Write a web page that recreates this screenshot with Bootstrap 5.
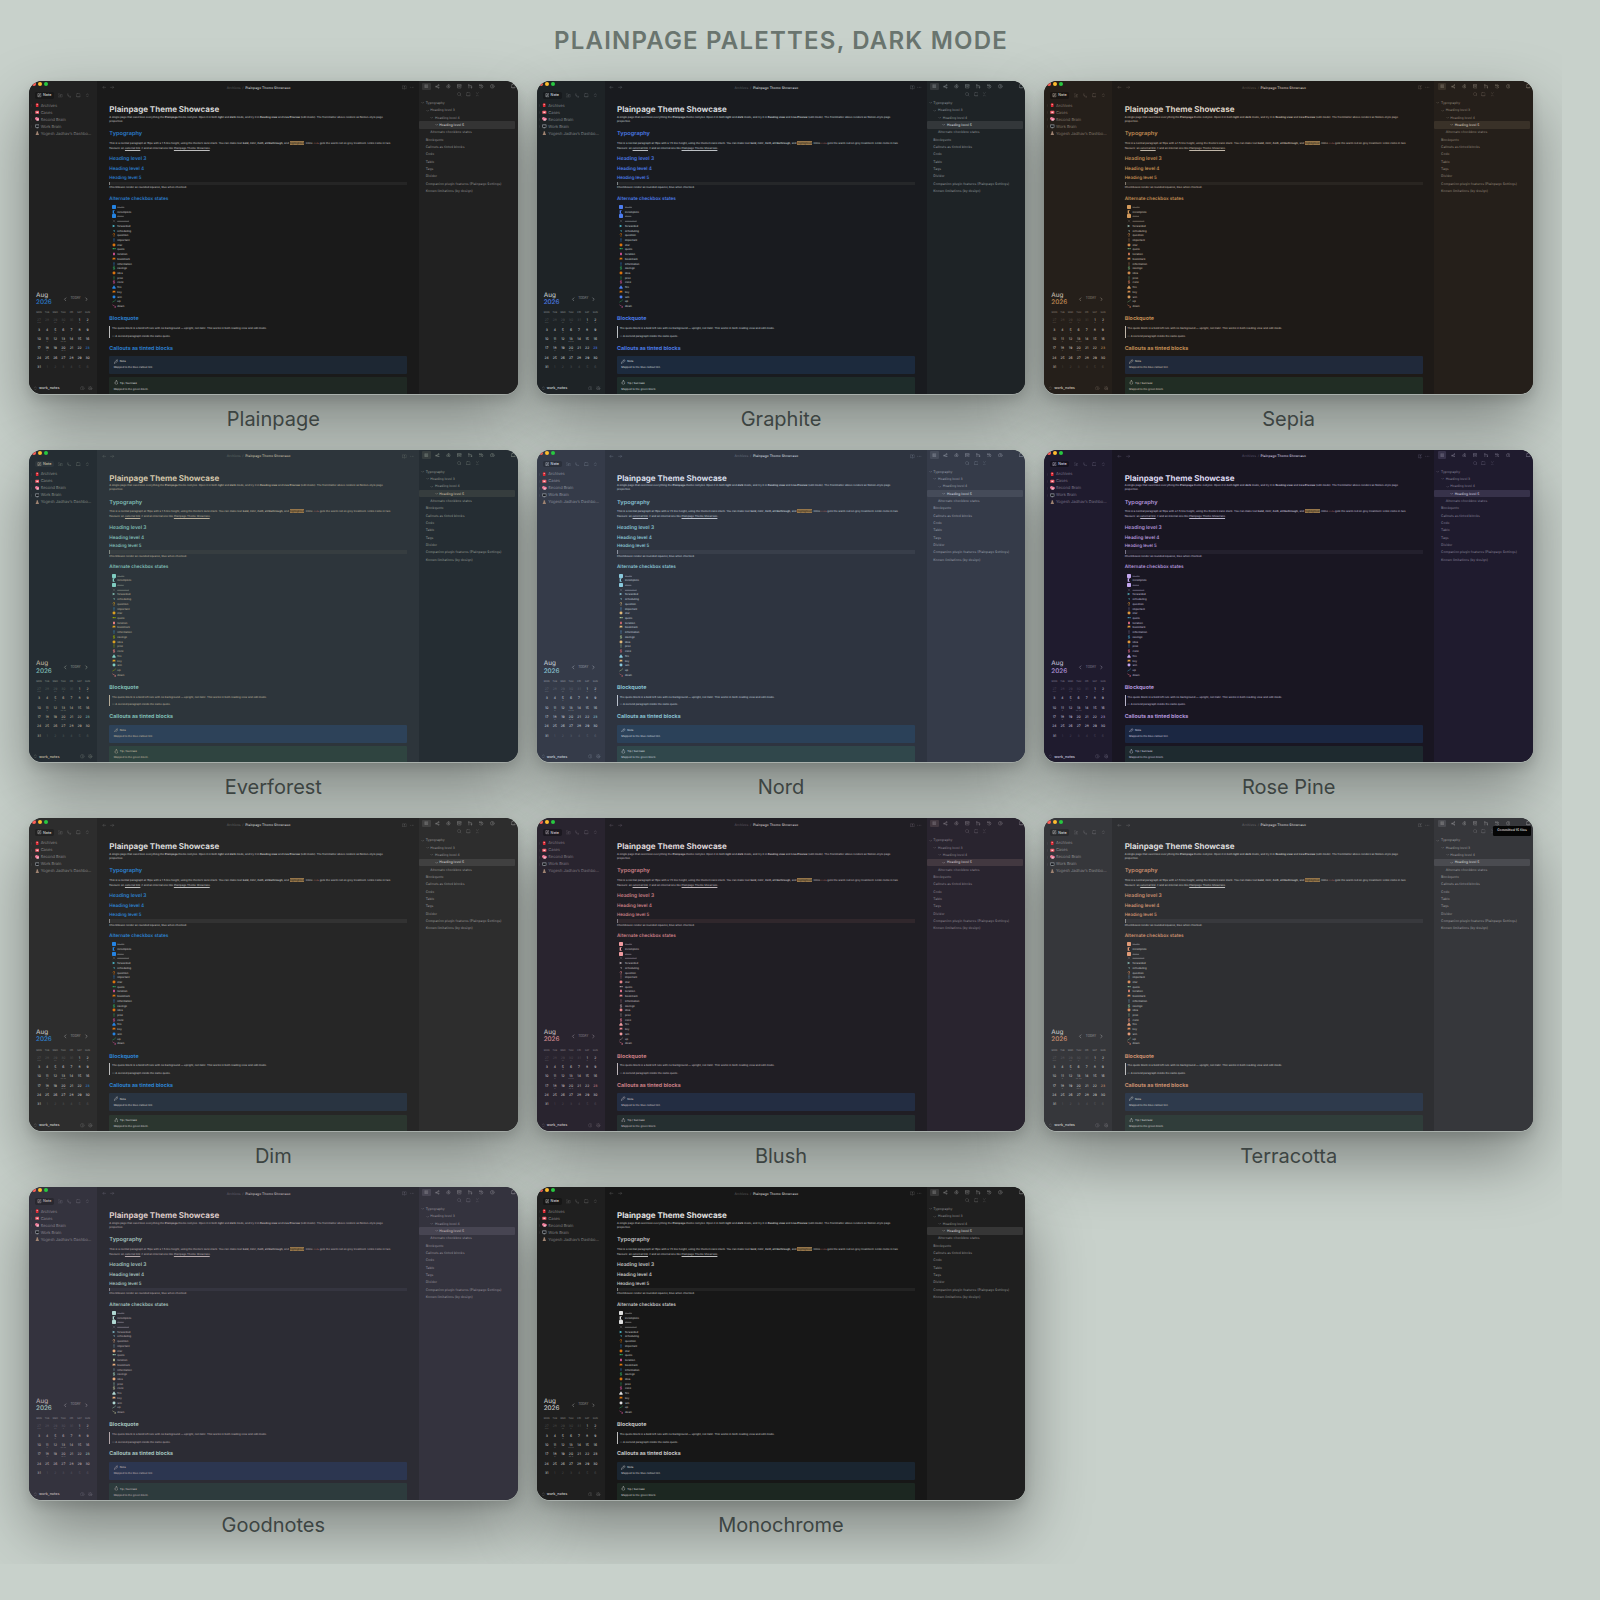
<!DOCTYPE html>
<html lang="en">
<head>
<meta charset="utf-8">
<meta name="viewport" content="width=device-width, initial-scale=1">
<title>Plainpage palettes, dark mode</title>
<link href="https://cdn.jsdelivr.net/npm/bootstrap@5.3.0/dist/css/bootstrap.min.css" rel="stylesheet">
<style>
  body { background: #c8d1cb; font-family: Inter, "Liberation Sans", sans-serif; padding-right: 38px; padding-bottom: 38px; }
  .gallery { padding: 29px 29px 27px; overflow: hidden; }
  .gallery-title { font-size: 24px; line-height: 24px; font-weight: 600; letter-spacing: .05em; color: #6a756f; margin-bottom: 28px; }
  .palettes { display: grid; grid-template-columns: repeat(3, minmax(0, 1fr)); column-gap: 19px; row-gap: 19px; }
  .frame { border-radius: 13px; box-shadow: 0 1px 0 #a9b0ac, 0 28px 64px rgba(0,0,0,.38), 0 6px 12px rgba(0,0,0,.12); overflow: hidden; }
  .palette-name { font-size: 20px; line-height: 24px; color: #3d4543; margin-top: 13px; }

  /* Miniature app window: laid out at desktop size, shown at a third */
  .mini { zoom: .33333; height: 938px; font-size: 8px; line-height: 12px; font-weight: 500; color: var(--text); background: var(--ed); text-rendering: geometricPrecision; overflow: hidden; }
  .mini svg { fill: none; stroke: currentColor; stroke-width: 1.6; stroke-linecap: round; stroke-linejoin: round; flex: none; display: block; width: 14px; height: 14px; }
  .mini button { background: none; border: 0; padding: 0; color: inherit; font-weight: inherit; display: flex; align-items: center; }
  .mini a { color: inherit; text-decoration: none; }
  .mini p { margin: 0; }
  .mini h3, .mini h4, .mini h5, .mini h6 { margin: 0; font-weight: 600; color: var(--head); line-height: 18px; }

  .side { width: 204px; background: var(--side); flex: none; }
  .lights { height: 20px; padding-left: 8px; gap: 6px; }
  .light { width: 12px; height: 12px; border-radius: 50%; }
  .tools { margin-top: 13px; height: 20px; padding-left: 18px; gap: 13px; color: var(--faint); }
  .mini .new-note { width: 57px; height: 20px; border-radius: 5px; background: var(--btn); color: var(--text); font-size: 11px; font-weight: 600; gap: 4px; padding-left: 6px; }
  .tree { margin-top: 11px; color: var(--muted); font-size: 12px; font-weight: 400; }
  .tree a { height: 21px; display: flex; align-items: center; gap: 4px; padding-left: 4px; }
  .tree .chev { width: 9px; height: 9px; color: var(--faint); }
  .tree .glyph { stroke: none; }
  .cal-head { padding: 0 26px 0 21px; font-size: 19px; line-height: 22px; }
  .cal-year { color: var(--acc); }
  .cal-nav { gap: 9px; margin-left: auto; font-size: 9px; color: var(--muted); }
  .cal-nav svg { stroke-width: 2.4; }
  .cal { width: 170px; margin: 15px 0 24px 18px; table-layout: fixed; font-size: 10px; text-align: center; line-height: 12px; }
  .cal th { font-size: 7px; height: 21px; color: var(--muted); font-weight: 500; padding: 0; vertical-align: top; text-align: center; }
  .cal td { height: 28px; padding: 0; vertical-align: top; }
  .cal .off { color: var(--faint); opacity: .7; }
  .cal .today { color: var(--head); }
  .dots { display: block; font-size: 7px; line-height: 5px; color: var(--muted); }
  .vault { height: 34px; padding: 0 12px 0 12px; gap: 11px; font-size: 11px; font-weight: 600; color: var(--faint); }
  .vault b { color: var(--text); font-weight: 600; }

  .bar-top { height: 40px; padding: 0 14px; font-size: 10px; color: var(--faint); }
  .bar-top .back-forward { gap: 12px; }
  .bar-top .view-tools { gap: 8px; }
  .crumb { gap: 5px; }
  .crumb b { font-weight: 600; color: var(--text); }
  .page { padding: 29px 35px 0 37px; }
  .mini .doc-title { font-size: 24px; line-height: 32px; font-weight: 700; color: var(--title); }
  .mini .sec { font-size: 16px; line-height: 20px; font-weight: 700; }
  .mini .sec-first { font-size: 17px; font-weight: 600; margin: 25px 0 9px; }
  .mini .lvl3 { font-size: 15px; margin: 19px 0 12px; }
  .mini .lvl4 { font-size: 14px; margin-bottom: 11px; }
  .mini .lvl5 { font-size: 13px; }
  .mini .states { font-size: 14px; margin-top: 19px; }
  .mini .callouts { margin-bottom: 12px; }
  .mini mark { padding: 0 1px; background: var(--hl); color: #241f18; }
  .mini code { font-size: 7px; color: #b56a62; font-family: "Liberation Mono", monospace; }
  .mini .ref { text-decoration: underline; }
  .active-line { height: 11px; background: var(--line); border-left: 1px solid var(--muted); }
  .tasks { height: 312px; margin: 9px 0 23px; padding-left: 7px; }
  .task { height: 14px; gap: 5px; display: flex; align-items: center; }
  .mini .task svg { width: 12px; height: 12px; stroke-width: 2.4; }
  .task input { appearance: none; width: 12px; height: 12px; margin: 0; border-radius: 2px; background: var(--box); }
  .done-text { color: var(--faint); text-decoration: line-through; }
  .quote { border-left: 3px solid var(--text); padding-left: 5px; gap: 11px; margin: 9px 0 24px; }
  .note-box { height: 54px; border-radius: 3px; padding: 9px 13px; margin-bottom: 10px; }
  .note-box.blue-tint { background: var(--note); }
  .note-box.green-tint { background: var(--tip); }
  .note-title { height: 14px; gap: 4px; font-weight: 600; margin-bottom: 5px; }

  .outline { width: 296px; background: var(--side); flex: none; color: var(--muted); font-size: 10px; }
  .tabs { height: 22px; margin-top: 5px; padding-left: 10px; gap: 7px; }
  .tabs button { width: 26px; height: 22px; justify-content: center; border-radius: 3px; }
  .tabs .on { background: var(--sel); }
  .tabs2 { height: 26px; gap: 12px; color: var(--faint); }
  .toc { margin-top: 2px; }
  .toc a { height: 22px; display: flex; align-items: center; margin-right: 8px; padding-left: 6px; gap: 4px; }
  .mini .toc svg { width: 10px; height: 10px; }
  .toc .lv2 { padding-left: 20px; } .toc .lv3 { padding-left: 34px; } .toc .lv4 { padding-left: 47px; }
  .toc .lv1n { padding-left: 20px; } .toc .lv2n { padding-left: 34px; }
  .toc .now { background: var(--sel); color: var(--text); font-weight: 600; border-radius: 3px; }
  .toast-tip { position: absolute; right: 7px; top: 24px; width: 112px; height: 28px; line-height: 28px; background: #050505; color: #ddd; border-radius: 4px; font-size: 10px; text-align: center; font-weight: 600; }
</style>
</head>
<body>
<svg width="0" height="0" class="position-absolute" aria-hidden="true">
  <symbol id="pen" viewBox="0 0 16 16"><path d="M8 2H3v11h11V8M6 10l1-3 6-6 2 2-6 6z"/></symbol>
  <symbol id="folder" viewBox="0 0 16 16"><path d="M1 3h5l2 2h7v9H1zM8 7v5M5.500 9.500h5"/></symbol>
  <symbol id="sort" viewBox="0 0 16 16"><path d="M3 2v8l8 4M3 6l3 4M11 10l3 4-4 1"/></symbol>
  <symbol id="square" viewBox="0 0 16 16"><rect x="2" y="2" width="12" height="12" rx="2"/><path d="M2 12h12"/></symbol>
  <symbol id="updown" viewBox="0 0 16 16"><path d="M5 6l3-4 3 4M5 10l3 4 3-4"/></symbol>
  <symbol id="right" viewBox="0 0 16 16"><path d="M6 3l5 5-5 5"/></symbol>
  <symbol id="left" viewBox="0 0 16 16"><path d="M10 3L5 8l5 5"/></symbol>
  <symbol id="down" viewBox="0 0 16 16"><path d="M3 6l5 5 5-5"/></symbol>
  <symbol id="aleft" viewBox="0 0 16 16"><path d="M14 8H3M7 4L3 8l4 4"/></symbol>
  <symbol id="aright" viewBox="0 0 16 16"><path d="M2 8h11M9 4l4 4-4 4"/></symbol>
  <symbol id="book" viewBox="0 0 16 16"><path d="M8 4v10M8 4C6 2 3 2 1 3v10c3-1 5 0 7 1 2-1 4-2 7-1V3c-2-1-5-1-7 1z"/></symbol>
  <symbol id="dots" viewBox="0 0 16 16"><path d="M2 8h1M8 8h1M13 8h1"/></symbol>
  <symbol id="list" viewBox="0 0 16 16"><path d="M5 3h8M5 6h8M5 9h8M5 12h8M3 3v9"/></symbol>
  <symbol id="graph" viewBox="0 0 16 16"><circle cx="4" cy="9" r="2.500"/><circle cx="12" cy="4" r="2"/><circle cx="12" cy="13" r="2"/><path d="M6 8l4-3M6 10l4 2"/></symbol>
  <symbol id="tag" viewBox="0 0 16 16"><path d="M2 8l5-6h4l4 6-4 6H7zM6 8h5M9 5v6"/></symbol>
  <symbol id="archive" viewBox="0 0 16 16"><path d="M1 2h14v4H1zM2 6v8h12V6M6 9h4"/></symbol>
  <symbol id="pull" viewBox="0 0 16 16"><path d="M3 14V2l-2 3M3 2l3 3M7 6h5v8M10 11l2 3 3-3"/></symbol>
  <symbol id="history" viewBox="0 0 16 16"><path d="M2 2v4h4M2 6a6 6 0 1 1 0 5M8 5v4l3 1"/></symbol>
  <symbol id="info" viewBox="0 0 16 16"><circle cx="8" cy="8" r="6.500"/><path d="M8 7v4M8 5v0"/></symbol>
  <symbol id="search" viewBox="0 0 16 16"><circle cx="7" cy="7" r="5.500"/><path d="M11 11l4 4"/></symbol>
  <symbol id="collapse" viewBox="0 0 16 16"><path d="M4 2l4 4 4-4M4 14l4-4 4 4"/></symbol>
  <symbol id="help" viewBox="0 0 16 16"><circle cx="8" cy="8" r="6.500"/><path d="M6 6a2 2 0 1 1 2 3M8 11v1"/></symbol>
  <symbol id="gear" viewBox="0 0 16 16"><circle cx="8" cy="8" r="5.500"/><circle cx="8" cy="8" r="2"/><path d="M8 1v2M8 13v2M1 8h2M13 8h2M3 3l1 1M12 12l1 1M13 3l-1 1M4 12l-1 1"/></symbol>
  <symbol id="pencil" viewBox="0 0 16 16"><path d="M1 15l1-4 9-9 3 3-9 9zM9 4l3 3"/></symbol>
  <symbol id="flame" viewBox="0 0 16 16"><path d="M8 1c1 4 5 5 5 9a5 5 0 0 1-10 0c0-2 1-3 2-4l1 2c1-2 2-4 2-7z"/></symbol>
  <symbol id="half" viewBox="0 0 12 12"><path d="M2 1h6v10H2z" fill="currentColor" stroke="none"/><path d="M6 3h5v6H6z" fill="var(--ed)" stroke="none"/></symbol>
  <symbol id="cross" viewBox="0 0 12 12"><path d="M3 3l6 6M9 3l-6 6" stroke-width="1.500"/></symbol>
  <symbol id="fwd" viewBox="0 0 12 12"><path d="M2 2l8 4-8 4z" fill="currentColor" stroke="none"/></symbol>
  <symbol id="sched" viewBox="0 0 12 12"><path d="M3 5l5-1v4z" fill="currentColor" stroke="none"/></symbol>
  <symbol id="quest" viewBox="0 0 12 12"><path d="M3 3c1-2 5-2 5 0s-2 2-2 4M6 10v0" stroke-width="2"/></symbol>
  <symbol id="bang" viewBox="0 0 12 12"><path d="M6 2v5M6 10v0" stroke-width="2"/></symbol>
  <symbol id="disc" viewBox="0 0 12 12"><circle cx="6" cy="6" r="4.500" fill="currentColor" stroke="none"/></symbol>
  <symbol id="quo" viewBox="0 0 12 12"><path d="M2 3h4v4H2zM7 3h4v4H7z" fill="currentColor" stroke="none"/></symbol>
  <symbol id="pin" viewBox="0 0 12 12"><path d="M3 2h6v5l-3 4-3-4z" fill="currentColor" stroke="none"/></symbol>
  <symbol id="flag" viewBox="0 0 12 12"><path d="M2 2h8v6l-4-1-4 2z" fill="currentColor" stroke="none"/></symbol>
  <symbol id="cash" viewBox="0 0 12 12"><path d="M8 3H4v3h4v3H4M6 1v10" stroke-width="1.500"/></symbol>
  <symbol id="fire" viewBox="0 0 12 12"><path d="M6 1l5 7v3H1V8z" fill="currentColor" stroke="none"/></symbol>
  <symbol id="rise" viewBox="0 0 12 12"><path d="M1 10l3-3 2 1 5-6" stroke-width="1.500"/></symbol>
  <symbol id="fall" viewBox="0 0 12 12"><path d="M1 2l3 3 2-1 5 6M8 10h3V7" stroke-width="1.500"/></symbol>
</svg>

<main class="gallery">
  <h1 class="gallery-title text-center text-uppercase">Plainpage palettes, dark mode</h1>
  <section class="palettes" id="palettes"></section>
</main>

<script>
const base = { orange: '#d9730d', green: '#2f9e5b', pink: '#c14c8a', blue: '#2a7fd0', teal: '#4cc0d0', hl: '#96764a' };
const themes = [
  { name: 'Plainpage', side: '#212121', ed: '#1a1a1a', head: '#2a7ac8', acc: '#2a7ac8', box: '#2483e2', title: '#d6d6d6', text: '#bdbdbd', muted: '#808080', faint: '#555', sel: '#343434', line: '#252525', btn: '#191919', note: '#1d2733', tip: '#1f2823' },
  { name: 'Graphite', side: '#1e2326', ed: '#191b1f', head: '#4a7ae4', acc: '#4a7ae4', box: '#4c7df0', title: '#d6d9dd', text: '#bcc0c4', muted: '#7f8589', faint: '#54595d', sel: '#33373a', line: '#252729', btn: '#171a1d', note: '#1c2a3d', tip: '#1e2c2a' },
  { name: 'Sepia', side: '#251f1a', ed: '#1e1a17', head: '#c08c54', acc: '#c08c54', box: '#d49a5b', title: '#ddd3c5', text: '#c0b6a8', muted: '#82786c', faint: '#5a5147', sel: '#393128', line: '#292521', btn: '#1a1613', note: '#20293a', tip: '#212d24', orange: '#d28b4c', green: '#6a9a68', pink: '#c0704f', blue: '#a0724c', teal: '#8fb0a8' },
  { name: 'Everforest', side: '#252d33', ed: '#2d353b', head: '#7fbbb3', acc: '#7fbbb3', box: '#7fccc0', title: '#d3c6aa', text: '#b5ab97', muted: '#828a83', faint: '#5a6361', sel: '#363d3e', line: '#363d40', btn: '#2c353b', note: '#2d4259', tip: '#2f4440', orange: '#dba020', green: '#8da101', pink: '#e67e80', blue: '#3a94c5', teal: '#83c0b2' },
  { name: 'Nord', side: '#353b49', ed: '#2e3440', head: '#88c0d0', acc: '#88c0d0', box: '#88c8dc', title: '#d8dee9', text: '#b9c0cc', muted: '#8a909d', faint: '#626978', sel: '#454b59', line: '#383e4a', btn: '#2b303b', note: '#2b4159', tip: '#30474b', orange: '#e0b878', green: '#a3be8c', pink: '#bf616a', blue: '#5e9bd1', teal: '#88c0d0' },
  { name: 'Rose Pine', side: '#1f1b2e', ed: '#191622', head: '#b094d8', acc: '#b094d8', box: '#c4a7f0', title: '#dedaf0', text: '#b9b5ca', muted: '#797489', faint: '#534e64', sel: '#37324a', line: '#23202d', btn: '#15121f', note: '#1b2742', tip: '#1e2a2f', orange: '#e09a3c', green: '#3e8fb0', pink: '#d0647c', blue: '#6f6a86', teal: '#4fa5b0' },
  { name: 'Dim', side: '#2d2d2d', ed: '#262626', head: '#2d82d0', acc: '#2d82d0', box: '#2483e2', title: '#dadada', text: '#bdbdbd', muted: '#868686', faint: '#5e5e5e', sel: '#404040', line: '#323232', btn: '#222', note: '#293441', tip: '#2b362f' },
  { name: 'Blush', side: '#29242f', ed: '#201e24', head: '#c87e85', acc: '#d28a90', box: '#f09a9f', title: '#dfd6da', text: '#bdb4b9', muted: '#7f7881', faint: '#59525d', sel: '#423840', line: '#30272c', btn: '#1b1820', note: '#232d42', tip: '#252f30', orange: '#e8858c', green: '#a9949a', pink: '#d86f8a', blue: '#9a5f70', teal: '#b8a8ae' },
  { name: 'Terracotta', side: '#36373b', ed: '#2e2f32', head: '#cb8f70', acc: '#cb8f70', box: '#e39c78', title: '#dcdcdc', text: '#bfbfbf', muted: '#8c8c8f', faint: '#646468', sel: '#4a4b50', line: '#38393d', btn: '#2a2b2e', note: '#2e3a4c', tip: '#303d3a', orange: '#e0925f', green: '#7fae8c', pink: '#cf7f6c', blue: '#6d97b8', teal: '#86b6b0', toast: 'Committed 15 files' },
  { name: 'Goodnotes', side: '#34333e', ed: '#2c2c34', head: '#a3c0bd', acc: '#a3c0bd', box: '#b0d8d2', title: '#dccac8', text: '#b3a6a9', muted: '#87838d', faint: '#605d69', sel: '#474552', line: '#353540', btn: '#292830', note: '#2c3650', tip: '#2d3b3d', orange: '#e5ab7c', green: '#8fc0aa', pink: '#a9b08a', blue: '#6f98a8', teal: '#7fb8c4' },
  { name: 'Monochrome', side: '#1f1f1f', ed: '#171717', head: '#c4c4c4', acc: '#c4c4c4', box: '#e0e0e0', title: '#e0e0e0', text: '#bdbdbd', muted: '#808080', faint: '#545454', sel: '#363636', line: '#232323', btn: '#161616', note: '#1a2530', tip: '#1c2721' }
];

const icon = (id, cls = '', color = '') => `<svg class="${cls}"${color ? ` style="color:${color}"` : ''} aria-hidden="true"><use href="#${id}"/></svg>`;
const tool = (id, label, cls = '') => `<button type="button" class="${cls}" aria-label="${label}">${icon(id)}</button>`;

const files = [['#e02b35', 'Archives', '<rect x="3" y="1" width="9" height="13" rx="3"/><path d="M6 4h3v3H6z" fill="#fff"/>'],
  ['#ee5a68', 'Cases', '<rect x="1" y="3" width="14" height="10" rx="2"/><path d="M5 6h6v4H5z" fill="#fbd0d4"/>'],
  ['#ef7f9c', 'Second Brain', '<path d="M1 8a5 5 0 0 1 9-5 4 4 0 0 1 4 8l-5 1-4 1z"/><path d="M7 9h5v4H9z" fill="#fff"/>'],
  ['#9aa0a6', 'Work Brain', '<path d="M1 2h14v10H1zM5 13h6v2H5z"/><path d="M3 4h10v6H3z" fill="#15181c"/>'],
  ['#a08472', 'Yogesh Jadhav\u2019s Dashbo\u2026', '<circle cx="8" cy="4" r="3"/><path d="M2 14l3-7h6l3 7z"/>']];

const tasks = [['box', 'to-do'], ['half', 'incomplete', 'box'], ['box', 'done'], ['cross', 'canceled', 'faint'], ['fwd', 'forwarded', 'teal'],
  ['sched', 'scheduling', 'teal'], ['quest', 'question', 'orange'], ['bang', 'important', 'blue'], ['disc', 'star', 'orange'], ['quo', 'quote', 'green'],
  ['pin', 'location', 'pink'], ['flag', 'bookmark', 'orange'], ['bang', 'information', 'blue'], ['cash', 'savings', 'green'], ['disc', 'idea', 'orange'],
  ['bang', 'pros', 'green'], ['cash', 'cons', 'pink'], ['fire', 'fire', 'box'], ['flag', 'key', 'orange'], ['disc', 'win', 'box'], ['rise', 'up', 'green'], ['fall', 'down', 'pink']];

const toc = [['lv1', 'Typography', 1], ['lv2', 'Heading level 3', 1], ['lv3', 'Heading level 4', 1], ['lv4 now', 'Heading level 5', 1], ['lv2n', 'Alternate checkbox states'],
  ...['Blockquote', 'Callouts as tinted blocks', 'Code', 'Table', 'Tags', 'Divider', 'Companion plugin features (Plainpage Settings)', 'Known limitations (by design)'].map(t => ['lv1n', t])];

const dots = { 0: '\u2022\u2022\u2022', 2: '\u2022\u2022', 3: '\u2022', 5: '\u2022', 6: '\u2022', 9: '\u2022', 15: '\u2022', 17: '\u2022\u2022 \u2022\u2022', 22: '\u2022', 24: '\u2022\u2022 \u2022' };
const days = Array.from({ length: 42 }, (_, i) => i < 5 ? 27 + i : i < 36 ? i - 4 : i - 35);
const dayCell = i => `<td class="${i < 5 || i > 35 ? 'off' : i === 27 ? 'today' : ''}">${days[i]}${dots[i] ? `<span class="dots">${dots[i]}</span>` : ''}</td>`;
const calRows = [0, 1, 2, 3, 4, 5].map(r => `<tr>${[0, 1, 2, 3, 4, 5, 6].map(c => dayCell(r * 7 + c)).join('')}</tr>`).join('');

const taskRow = ([id, label, color], n, k) => {
  if (id === 'box') return `<label class="task" for="t${k}-${n}"><input type="checkbox" id="t${k}-${n}" checked><span class="done-text">${label}</span></label>`;
  return `<div class="task">${icon(id, '', `var(--${color})`)}<span class="${id === 'cross' ? 'done-text' : ''}">${label}</span></div>`;
};

const card = (theme, k) => {
  const t = { ...base, ...theme };
  const vars = Object.entries(t).filter(([key]) => key !== 'name' && key !== 'toast').map(([key, v]) => `--${key}:${v}`).join(';');
  return `<figure class="m-0">
  <div class="frame"><div class="mini d-flex position-relative" style="${vars}">
    <aside class="side d-flex flex-column">
      <div class="lights d-flex align-items-center"><span class="light" style="background:#ff5f57"></span><span class="light" style="background:#febc2e"></span><span class="light" style="background:#28c840"></span></div>
      <div class="tools d-flex align-items-center"><button type="button" class="new-note">${icon('pen')}Note</button>${tool('folder', 'New folder')}${tool('sort', 'Sort')}${tool('square', 'Layout')}${tool('updown', 'Expand')}</div>
      <nav class="tree">${files.map(([c, n, shape], i) => `<a href="#">${i < 4 ? icon('right', 'chev') : '<svg class="chev"></svg>'}<svg class="glyph" viewBox="0 0 16 16"><g fill="${c}">${shape}</g></svg>${n}</a>`).join('')}</nav>
      <div class="cal-head d-flex align-items-center mt-auto"><div>Aug<div class="cal-year">2026</div></div>
        <div class="cal-nav d-flex align-items-center">${tool('left', 'Previous month')}<button type="button">TODAY</button>${tool('right', 'Next month')}</div></div>
      <table class="cal"><thead><tr>${['MON', 'TUE', 'WED', 'THU', 'FRI', 'SAT', 'SUN'].map(d => `<th scope="col">${d}</th>`).join('')}</tr></thead><tbody>${calRows}</tbody></table>
      <div class="vault d-flex align-items-center"><span class="d-flex align-items-center gap-1">${icon('updown')}<b>work_notes</b></span><span class="ms-auto"></span>${tool('help', 'Help')}${tool('gear', 'Settings')}</div>
    </aside>
    <article class="flex-grow-1">
      <div class="bar-top d-flex align-items-center justify-content-between">
        <div class="back-forward d-flex">${tool('aleft', 'Back')}${tool('aright', 'Forward')}</div>
        <div class="crumb d-flex"><span>Archives</span><span>/</span><b>Plainpage Theme Showcase</b></div>
        <div class="view-tools d-flex">${tool('book', 'Reading view')}${tool('dots', 'More')}</div>
      </div>
      <div class="page">
        <h3 class="doc-title">Plainpage Theme Showcase</h3>
        <p>A single page that exercises everything the <b>Plainpage</b> theme restyles. Open it in both <b>light</b> and <b>dark</b> mode, and try it in <b>Reading view</b> and <b>Live Preview</b> (edit mode). The frontmatter above renders as Notion-style page<br>properties.</p>
        <h4 class="sec sec-first">Typography</h4>
        <p>This is a normal paragraph at 16px with a 1.5 line height, using the theme\u2019s sans stack. You can make text <b>bold</b>, <i>italic</i>, <b><i>both</i></b>, <b>strikethrough</b>, and <mark>highlighted</mark>. Inline <code>code</code> gets the warm red on grey treatment. Links come in two<br>flavours: an <a class="ref" href="#">external link</a> \u2197 and an internal one like <a class="ref" href="#">Plainpage Theme Showcase</a>.</p>
        <h5 class="lvl3">Heading level 3</h5>
        <h5 class="lvl4">Heading level 4</h5>
        <h6 class="lvl5">Heading level 5</h6>
        <div class="active-line"></div>
        <p>Checkboxes render as rounded squares, blue when checked.</p>
        <h5 class="states">Alternate checkbox states</h5>
        <div class="tasks d-flex flex-column justify-content-between">${tasks.map((x, n) => taskRow(x, n, k)).join('')}</div>
        <h4 class="sec">Blockquote</h4>
        <div class="quote d-flex flex-column"><p>The quote block is a bold left rule with no background \u2014 upright, not italic. This works in both reading view and edit mode.</p><p>\u2014 A second paragraph inside the same quote.</p></div>
        <h4 class="sec callouts">Callouts as tinted blocks</h4>
        <div class="note-box blue-tint"><div class="note-title d-flex align-items-center">${icon('pencil')}Note</div><p>Mapped to the blue callout tint.</p></div>
        <div class="note-box green-tint"><div class="note-title d-flex align-items-center">${icon('flame')}Tip / Success</div><p>Mapped to the green block.</p></div>
      </div>
    </article>
    <aside class="outline">
      <div class="tabs d-flex">${tool('list', 'Outline', 'on')}${tool('graph', 'Graph')}${tool('tag', 'Tags')}${tool('archive', 'Archive')}${tool('pull', 'Source control')}${tool('history', 'History')}${tool('info', 'Info')}${tool('square', 'Toggle sidebar', 'ms-auto')}</div>
      <div class="tabs2 d-flex align-items-center justify-content-center">${tool('search', 'Search')}${tool('square', 'View')}${tool('collapse', 'Collapse')}</div>
      <nav class="toc">${toc.map(([c, n, open]) => `<a href="#" class="${c}">${open ? icon('down') : ''}${n}</a>`).join('')}</nav>
    </aside>
    ${t.toast ? `<div class="toast-tip">${t.toast}</div>` : ''}
  </div></div>
  <figcaption class="palette-name text-center">${t.name}</figcaption>
</figure>`;
};
document.getElementById('palettes').innerHTML = themes.map(card).join('');
</script>
<script src="https://cdn.jsdelivr.net/npm/bootstrap@5.3.0/dist/js/bootstrap.bundle.min.js"></script>
</body>
</html>
